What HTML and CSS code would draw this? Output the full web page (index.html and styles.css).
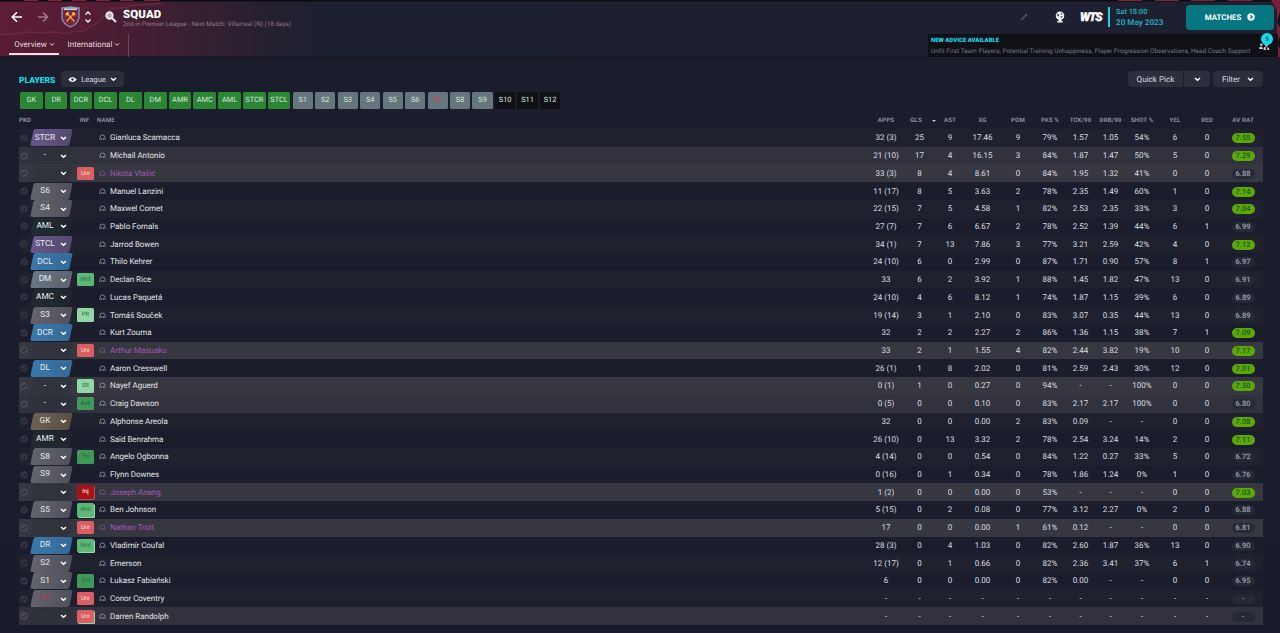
FILE: index.html
```html
<!DOCTYPE html>
<html lang="en">
<head>
  <meta charset="UTF-8">
  <meta name="viewport" content="width=device-width, initial-scale=1.0">
  <title>Squad</title>
  <link rel="stylesheet" href="styles.css">
</head>
<body>
  <header>
    <svg class="header-art" width="1280" height="57" viewBox="0 0 1280 57">
      <path d="M0 3H162C150 6 140 4 130 9C118 14 112 7 106 14C100 25 95 24 90 29C80 34 70 30 60 33C45 35 35 30 22 33L0 35Z" fill="#64203a" opacity=".35"/>
      <path d="M162 3C150 6 140 4 130 6C120 10 114 5 108 12C100 22 96 24 90 27C82 34 76 30 70 33C62 35 56 31 50 32C40 35 32 30 22 33L0 35" fill="none" stroke="#8a3b52" stroke-width=".8" opacity=".7"/>
      <path d="M0 0H1280V1.6H0Z" fill="#0c0b12"/>
      <path d="M24 .5h14M48 .5h14M72 .5h14M96 .5h14M120 .5h14M144 .5h16M1118 .5h24M1155 .5h24M1191 .5h24M1228 .5h24" stroke="#7d2339"/>
      <path d="M1271 0h9v57h-3V10Z" fill="#7a2038"/>
      <path d="M1280 12l-3 10 3 6zM1280 36l-3 8 3 5z" fill="#14121e"/>
    </svg>

    <div class="top-row">
      <svg class="back" width="12" height="12" viewBox="0 0 12 12"><path d="M11 6H1.500M6 1.200L1.200 6 6 10.800"/></svg>
      <svg class="forward" width="12" height="12" viewBox="0 0 12 12"><path d="M1 6h9.500M6 1.500L10.500 6 6 10.500"/></svg>
      <svg class="crest" width="19" height="22" viewBox="0 0 19 22">
        <path d="M1 2Q5 2 9.500 1Q14 2 18 2V12Q17 18 9.500 21Q2 18 1 12Z" fill="#7a263a" stroke="#7f9fc4" stroke-width="1.300"/>
        <path d="M3 3.200h13" stroke="#c7cfe0" stroke-width="1.800"/>
        <path d="M5.500 15.500L13 7.500M13.500 15.500L6 7.500" stroke="#eba53a" stroke-width="1.300"/>
        <path d="M5 9L7.500 6.500M11.500 6.500L14 9" stroke="#ffc845" stroke-width="2.200"/>
      </svg>
      <svg class="switch" width="8" height="14" viewBox="0 0 8 14"><path d="M1.500 4.500L4 2l2.500 2.500M1.500 9.500L4 12l2.500-2.500"/></svg>
      <svg class="search" width="12" height="12" viewBox="0 0 12 12"><circle cx="4.500" cy="4.500" r="3.200"/><path d="M7 7l4 4"/></svg>
      <div class="title">
        <h1>SQUAD</h1>
        <p>2nd in Premier League - Next Match: Villarreal (N) (18 days)</p>
      </div>
      <svg class="pencil" width="8" height="8" viewBox="0 0 8 8"><path d="M1 7l6-6"/></svg>
      <svg class="trophy" width="12" height="12" viewBox="0 0 12 12">
        <circle cx="6" cy="4.700" r="4.300" fill="#eef0f4"/>
        <path d="M4.500 8.500h3v1.500h1.200v1.500H3.300V10h1.200Z" fill="#eef0f4"/>
        <path d="M3.500 2.500l1.700 1L4.700 5.500 3 5zM6.800 1.500l1.700 1.200-1.200 1.200zM6.200 5.500L8.700 5 7.500 7.200z" fill="#4a4c5a"/>
      </svg>
      <div class="wts">WTS</div>
      <div class="date"><span>Sat 15:00</span><span>20 May 2023</span></div>
      <button class="matches">MATCHES
        <svg width="8" height="8" viewBox="0 0 8 8"><circle cx="4" cy="4" r="3.700" fill="#fff"/><path d="M3.300 2.200L5.200 4 3.300 5.800" fill="none" stroke="#067781" stroke-width="1.200"/></svg>
      </button>
    </div>

    <div class="bottom-row">
      <nav>
        <a class="tab active">Overview <svg class="chev" width="6" height="5" viewBox="0 0 6 5"><path d="M1 1.300l2 2 2-2"/></svg></a>
        <a class="tab">International <svg class="chev" width="6" height="5" viewBox="0 0 6 5"><path d="M1 1.300l2 2 2-2"/></svg></a>
      </nav>
      <div class="advice">
        <strong>NEW ADVICE AVAILABLE</strong>
        <p>Unfit First Team Players, Potential Training Unhappiness, Player Progression Observations, Head Coach Support</p>
        <svg class="staff" width="13" height="8" viewBox="0 0 13 8"><path d="M1 7Q1 4.500 3 4.500 5 4.500 5 7ZM5.500 8Q5.500 4.500 8 4.500 11 4.500 11.500 8Z" fill="#c8cad0"/><circle cx="8.500" cy="2.500" r="1.800" fill="#c8cad0"/><circle cx="3.300" cy="2.700" r="1.300" fill="#c8cad0"/><path d="M7.800 5h1.500v3H7.800z" fill="#111"/></svg>
        <span class="count">5</span>
      </div>
    </div>
  </header>

  <main>
    <div class="toolbar">
      <h2>PLAYERS</h2>
      <button class="btn league">
        <svg width="9" height="7" viewBox="0 0 9 7"><path d="M.3 3.500Q4.500-1.500 8.700 3.500Q4.500 8.500 .3 3.500Z" fill="#fff"/><circle cx="4.500" cy="3.500" r="1.300" fill="#2c2e3b"/></svg>
        League
        <svg class="chev big" width="7" height="5" viewBox="0 0 7 5"><path d="M1 1l2.500 2.300L6 1"/></svg>
      </button>
      <div class="split">
        <button class="btn quick">Quick Pick</button>
        <button class="btn drop"><svg class="chev big" width="7" height="5" viewBox="0 0 7 5"><path d="M1 1l2.500 2.300L6 1"/></svg></button>
      </div>
      <button class="btn filter">Filter <svg class="chev big" width="7" height="5" viewBox="0 0 7 5"><path d="M1 1l2.500 2.300L6 1"/></svg></button>
    </div>

    <div class="slots" id="slots"></div>

    <div class="row head">
      <span class="h-pkd">PKD</span><span></span><span class="h-inf">INF</span><span class="h-name">NAME</span>
      <span>APPS</span><span class="h-gls">GLS<i></i></span><span>AST</span><span>XG</span><span>POM</span><span>PAS %</span><span>TCK/90</span><span>DRB/90</span><span>SHOT %</span><span>YEL</span><span>RED</span><span>AV RAT</span>
    </div>
    <div id="players"></div>
  </main>

  <script>
    const green = ['GK', 'DR', 'DCR', 'DCL', 'DL', 'DM', 'AMR', 'AMC', 'AML', 'STCR', 'STCL'];
    const subs = ['S1', 'S2', 'S3', 'S4', 'S5', 'S6', 'S7', 'S8', 'S9'];
    const empty = ['S10', 'S11', 'S12'];

    // pos|pill|inf|name|flags|stats
    // flags: h = highlighted row, p = purple name, r = red position, s = second badge behind
    const players = [
      'STCR|striker||Gianluca Scamacca||32 (3),25,9,17.46,9,79%,1.57,1.05,54%,6,0,7.55',
      '-|none||Michail Antonio|h|21 (10),17,4,16.15,3,84%,1.87,1.47,50%,5,0,7.29',
      '-|none|Unr|Nikola Vlašić|hpr|33 (3),8,4,8.61,0,84%,1.95,1.32,41%,0,0,6.88',
      'S6|sub||Manuel Lanzini||11 (17),8,5,3.63,2,78%,2.35,1.49,60%,1,0,7.14',
      'S4|sub||Maxwel Cornet||22 (15),7,5,4.58,1,82%,2.53,2.35,33%,3,0,7.04',
      'AML|attack||Pablo Fornals||27 (7),7,6,6.67,2,78%,2.52,1.39,44%,6,1,6.99',
      'STCL|striker||Jarrod Bowen||34 (1),7,13,7.86,3,77%,3.21,2.59,42%,4,0,7.12',
      'DCL|defence||Thilo Kehrer||24 (10),6,0,2.99,0,87%,1.71,0.90,57%,8,1,6.97',
      'DM|mid|Wnt|Declan Rice||33,6,2,3.92,1,88%,1.45,1.82,47%,13,0,6.91',
      'AMC|attack||Lucas Paquetá||24 (10),4,6,8.12,1,74%,1.87,1.15,39%,6,0,6.89',
      'S3|sub|PR|Tomáš Souček||19 (14),3,1,2.10,0,83%,3.07,0.35,44%,13,0,6.89',
      'DCR|defence||Kurt Zouma||32,2,2,2.27,2,86%,1.36,1.15,38%,7,1,7.09',
      '-|none|Unr|Arthur Masuaku|hpr|33,2,1,1.55,4,82%,2.44,3.82,19%,10,0,7.17',
      'DL|defence||Aaron Cresswell||26 (1),1,8,2.02,0,81%,2.59,2.43,30%,12,0,7.01',
      '-|none|Slt|Nayef Aguerd|h|0 (1),1,0,0.27,0,94%,-,-,100%,0,0,7.50',
      '-|none|Ask|Craig Dawson|h|0 (5),0,0,0.10,0,83%,2.17,2.17,100%,0,0,6.80',
      'GK|keeper||Alphonse Areola||32,0,0,0.00,2,83%,0.09,-,-,0,0,7.08',
      'AMR|attack||Saïd Benrahma||26 (10),0,13,3.32,2,78%,2.54,3.24,14%,2,0,7.11',
      'S8|sub|Trn|Angelo Ogbonna||4 (14),0,0,0.54,0,84%,1.22,0.27,33%,5,0,6.72',
      'S9|sub||Flynn Downes||0 (16),0,1,0.34,0,78%,1.86,1.24,0%,1,0,6.76',
      '-|none|Inj|Joseph Anang|hpr|1 (2),0,0,0.00,0,53%,-,-,-,0,0,7.03',
      'S5|sub|Wnt|Ben Johnson|s|5 (15),0,2,0.08,0,77%,3.12,2.27,0%,2,0,6.88',
      '-|none|Unr|Nathan Trott|hpr|17,0,0,0.00,1,61%,0.12,-,-,0,0,6.81',
      'DR|defence|Wnt|Vladimír Coufal|s|28 (3),0,4,1.03,0,82%,2.60,1.87,36%,13,0,6.90',
      'S2|sub||Emerson||12 (17),0,1,0.66,0,82%,2.36,3.41,37%,6,1,6.74',
      'S1|sub|Trn|Łukasz Fabiański||6,0,0,0.00,0,82%,0.00,-,-,0,0,6.95',
      'S7|sub|Unr|Conor Coventry|r|-,-,-,-,-,-,-,-,-,-,-,-',
      '-|none|Unr|Darren Randolph|hrs|-,-,-,-,-,-,-,-,-,-,-,-'
    ];

    const slot = (s, cls) => `<span class="slot ${cls}">${s}</span>`;
    document.getElementById('slots').innerHTML =
      green.map(s => slot(s, 'first')).join('') +
      subs.map(s => slot(s, s === 'S7' ? 'bench red' : 'bench')).join('') +
      empty.map(s => slot(s, 'empty')).join('');

    const tick = '<svg class="tick" width="8" height="8" viewBox="0 0 8 8"><circle cx="4" cy="4" r="3.800"/><path d="M2.200 4l1.300 1.300 2.300-2.600"/></svg>';
    const chev = '<svg class="chev big" width="7" height="5" viewBox="0 0 7 5"><path d="M1 1l2.500 2.300L6 1"/></svg>';
    const face = '<svg class="face" width="7" height="7" viewBox="0 0 7 7"><path d="M1 6V3.200Q1.200 1 3.500 1T6 3.200V6M2.500 6V4.200M4.500 6V4.200"/></svg>';

    document.getElementById('players').innerHTML = players.map(p => {
      const [pos, pill, inf, name, flags, stats] = p.split('|');
      const nums = stats.split(',');
      const rat = nums.pop();
      const cls = [...flags].map(f => ' f-' + f).join('');
      return `<div class="row player${cls}">
        ${tick}
        <span class="pos ${pill}"><b>${pos}</b>${chev}</span>
        <span class="inf">${inf ? `<em class="badge ${inf.toLowerCase()}">${inf}</em>` : ''}</span>
        <span class="name">${face}${name}</span>
        ${nums.map(n => `<span>${n}</span>`).join('')}
        <span><em class="rating${parseFloat(rat) >= 7 ? ' good' : ''}">${rat}</em></span>
      </div>`;
    }).join('');
  </script>
</body>
</html>
```
FILE: styles.css
```css
* { box-sizing: border-box; }
body { margin: 0; height: 633px; overflow: hidden; background: linear-gradient(#1b1d2c, #1a1d2b 80%, #191b2b); color: #dcdde2; font-family: Roboto, "Liberation Sans", sans-serif; font-size: 8px; text-rendering: geometricPrecision; }
h1, h2, p { margin: 0; }
button { border: 0; margin: 0; padding: 0; font: inherit; color: inherit; text-rendering: inherit; }
svg { flex: none; }

header { position: relative; height: 57px; background: linear-gradient(90deg, #581c33 0, #4e1d33 90px, #3e1f32 170px, #2b2030 240px, #1c2030 320px, #1e2030 700px, #1e1f30 100%); border-bottom: 1px solid #171622; }
.header-art { position: absolute; left: 0; top: 0; }
.top-row { position: relative; display: flex; align-items: center; height: 34px; padding: 0 6px 0 11px; }
.back, .forward, .switch, .search { fill: none; stroke: #fff; stroke-width: 1.6; }
.forward { margin-left: 14px; stroke: #a5768a; }
.crest { margin-left: 12px; fill: none; }
.switch { margin-left: 4px; stroke-width: 1.3; }
.search { margin-left: 13px; stroke-width: 1.9; stroke: #f0e8ec; }
.search circle { fill: #b9a3b0; }
.title { margin-left: 6px; }
.title h1 { margin-top: 2px; font-size: 11.4px; line-height: 12px; font-weight: 900; color: #fff; letter-spacing: .15px; }
.title p { font-size: 6.4px; line-height: 9px; color: #8e7d8a; white-space: nowrap; }
.pencil { margin-left: auto; fill: none; stroke: #555764; stroke-width: 1.5; }
.trophy { margin-left: 26px; }
.wts { width: 23px; margin-left: 14px; font-size: 12px; font-weight: 900; font-style: italic; letter-spacing: -1.1px; color: #fff; -webkit-text-stroke: .4px #fff; }
.date { display: flex; flex-direction: column; width: 78px; height: 20px; justify-content: center; margin-left: 5px; padding-left: 6px; border-left: 2px solid #12d9e8; color: #1fa8b5; font-size: 7.3px; line-height: 10px; font-weight: 700; white-space: nowrap; }
.date span + span { font-size: 8.1px; }
.matches { display: flex; align-items: center; justify-content: center; gap: 6px; width: 88px; height: 25px; border-radius: 4px; background: #067781; color: #fff; font-size: 7.9px; font-weight: 700; }

.bottom-row { position: relative; display: flex; justify-content: space-between; height: 23px; }
nav { display: flex; width: 129px; padding-left: 9px; border-right: 1px solid #65455a; }
.tab { display: flex; align-items: center; justify-content: center; gap: 2px; width: 50px; padding: 2px 0 0 1px; font-size: 8px; color: #e3d8de; white-space: nowrap; border-bottom: 2px solid transparent; height: 21px; }
.tab + .tab { width: 69px; }
.tab.active { border-color: #f3dce4; }
.chev { fill: none; stroke: currentColor; stroke-width: 1; }
.chev.big { stroke: #fff; stroke-width: 1.5; }
.advice { position: relative; width: 350px; height: 23px; margin-right: 2px; padding: 3px 0 0 3px; background: #101117; }
.advice strong { display: block; font-size: 6px; line-height: 8px; font-weight: 900; color: #14dbe8; }
.advice p { margin-top: 2px; font-size: 6.4px; line-height: 9px; color: #777982; letter-spacing: .035px; white-space: nowrap; }
.staff { position: absolute; right: 7px; top: 8px; }
.count { position: absolute; right: 5px; top: -1px; width: 12px; height: 12px; border-radius: 50%; background: #13dcec; color: #125a68; font-size: 6.5px; line-height: 12px; text-align: center; font-weight: 700; }

main { padding: 14px 17px 0 19px; }
.toolbar { display: flex; align-items: center; height: 16px; }
.toolbar h2 { width: 42px; padding-top: 3px; font-size: 8.5px; font-weight: 900; color: #14dbe8; }
.btn { display: flex; align-items: center; justify-content: center; height: 16px; border-radius: 4px; background: #2c2e3b; color: #dadbe0; font-size: 8.1px; white-space: nowrap; }
.league { width: 63px; gap: 4px; font-size: 7.6px; }
.split { display: flex; gap: 1px; margin-left: auto; }
.quick { width: 55px; border-radius: 4px 0 0 4px; }
.drop { width: 26px; border-radius: 0 4px 4px 0; }
.filter { width: 50px; margin-left: 3px; gap: 7px; }

.slots { display: flex; gap: 2.2px; margin: 5px 0 0 1px; height: 17px; }
.slot { display: flex; align-items: center; justify-content: center; height: 17px; padding-bottom: 1.5px; border-radius: 1.5px; font-size: 7.4px; color: #d7e5dc; }
.first { width: 22.6px; background: #2b8634; }
.bench { width: 20.3px; background: #65767e; }
.bench.red { color: #c24c4e; }
.empty { width: 20.3px; background: #101117; }

.row { display: grid; grid-template-columns: 11px 43px 24px 773px 32px 35px 26px 39px 32px 32px 29px 31px 32px 34px 30px 42px; align-items: center; width: 1244px; text-align: center; white-space: nowrap; }
.head { height: 20px; padding-top: 3px; font-size: 6.1px; font-weight: 700; color: #8d909b; letter-spacing: .15px; }
.h-pkd { justify-self: start; }
.h-name { justify-self: start; }
.h-inf { padding-right: 1px; }
.h-gls { position: relative; padding-right: 7px; }
.h-gls i { position: absolute; right: 1px; top: 3px; border: 2px solid transparent; border-top: 2.5px solid #c9cad0; }
.player { height: 17.73px; font-size: 8px; background: #1b1d2c; }
.player:nth-child(odd) { background: #1f212f; }
.player.f-h { background: #31323e; }
.player.f-h:nth-child(odd) { background: #363741; }
.tick { justify-self: start; margin-left: 1px; fill: #30323f; stroke: none; }
.tick path { fill: none; stroke: #171925; stroke-width: 1; }
.f-h .tick { fill: #454651; }
.pos { position: relative; display: flex; align-items: center; height: 17px; }
.pos::before { content: ""; position: absolute; left: 2px; top: 0; width: 39px; height: 16.5px; border-radius: 2px; transform: skewX(-12deg); }
.pos b { position: relative; width: 30px; margin-top: -.5px; font-weight: 400; font-size: 8.3px; color: #e8e9ed; }
.pos .chev { position: relative; margin-top: 1px; }
.striker::before { background: linear-gradient(90deg, #65588a, #55496f); }
.sub::before { background: linear-gradient(90deg, #62636d, #50515c); }
.defence::before { background: linear-gradient(90deg, #3a78ab, #356a98); }
.mid::before { background: linear-gradient(90deg, #6a7683, #5b6470); }
.keeper::before { background: linear-gradient(90deg, #6c6252, #595042); }
.attack::before { background: linear-gradient(90deg, #202b31, #1f252e); }
.none::before { background: #2d2e39; opacity: .6; }
.f-r .pos b { color: #84404b; }
.f-r .sub b { color: #b04049; }
.badge { display: block; width: 17px; height: 13.5px; margin-left: 4px; border-radius: 1.5px; font-style: normal; font-size: 6px; line-height: 14px; }
.unr { background: #d95f62; color: #fbdcdc; }
.inj { background: #a81217; color: #fff; box-shadow: .7px .7px 0 #d95f62; }
.wnt { background: #5cb877; color: #2d6d43; }
.pr, .slt { background: #93d7a7; color: #34694a; }
.ask, .trn { background: #3f9958; color: #1f6337; }
.f-s .badge { box-shadow: 1px 1px 0 #97dba9; }
.name { display: flex; align-items: center; gap: 4px; padding-left: 2px; color: #e2e3e8; letter-spacing: -.04px; }
.face { fill: none; stroke: #8b8d98; stroke-width: .9; }
.f-p .name { color: #a258b4; }
.f-p .face { stroke: #77527f; }
.rating { display: block; width: 23px; height: 10px; margin: 1px auto 0; border-radius: 5px; background: #252936; color: #a0a3ad; font-style: normal; font-weight: 500; font-size: 7.5px; line-height: 10px; }
.f-h .rating { background: #262a37; }
.rating.good, .f-h .rating.good { background: #5ba908; color: #1f5410; }
```
